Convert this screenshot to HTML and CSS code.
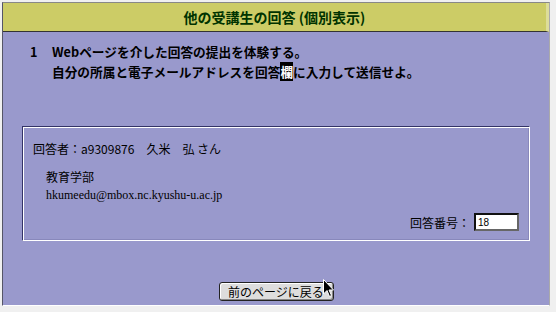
FILE: index.html
```html
<!DOCTYPE html>
<html lang="ja">
<head>
    <meta charset="UTF-8">
    <title>他の受講生の回答 (個別表示)</title>
    <link rel="stylesheet" href="styles.css">
</head>
<body>
    <div class="frame">
        <div class="header">他の受講生の回答 (個別表示)</div>
        <div class="question">
            <span class="qnum">1</span>
            <div class="qtext">
                Webページを介した回答の提出を体験する。<br>
                自分の所属と電子メールアドレスを回答<span class="sel">欄</span>に入力して送信せよ。
            </div>
        </div>
        <div class="answer">
            <div class="who">回答者：a9309876　久米　弘 さん</div>
            <div class="dept">教育学部</div>
            <div class="mail">hkumeedu@mbox.nc.kyushu-u.ac.jp</div>
            <div class="numrow">
                <span>回答番号：</span>
                <input type="text" class="num" value="18">
            </div>
        </div>
        <div class="back">
            <button class="backbtn">前のページに戻る</button>
            <svg class="cursor" width="12" height="19" viewBox="0 0 12 19">
                <path d="M0.5 0.5 L0.5 15 L4 11.5 L6.5 17.5 L8.5 16.5 L6 11 L10.5 11 Z" fill="#000" stroke="#fff" stroke-width="1"/>
            </svg>
        </div>
    </div>
</body>
</html>
```

FILE: styles.css
```css
body {
    margin: 0;
    background: #f0f0f0;
    font-family: "Noto Sans CJK JP", sans-serif;
}
.frame {
    margin: 2px 0 0 2px;
    width: 546px;
    height: 302px;
    background: #9999cc;
    border-top: 1px solid #888888;
    border-left: 1px solid #555566;
    border-right: 1px solid #aaaaaa;
    border-bottom: 1px solid #ffffff;
}
.header {
    height: 28px;
    line-height: 28px;
    background: #cccc66;
    border-bottom: 1px solid #333333;
    border-right: 3px solid #dddd99;
    text-align: center;
    font-size: 14px;
    font-weight: bold;
    color: #003300;
}
.question {
    display: flex;
    margin-top: 10px;
    padding-left: 27px;
    font-size: 12.7px;
    font-weight: bold;
    line-height: 20px;
    color: #000;
}
.qnum {
    width: 22px;
}
.sel {
    background: #000;
    color: #fff;
}
.answer {
    margin: 44px 19px 0 19px;
    height: 113px;
    padding: 0 10px;
    border: 1px solid;
    border-color: #333366 #ffffff #ffffff #333366;
    box-shadow: inset 1px 1px 0 #ffffff, inset -1px -1px 0 #8888bb;
    font-size: 12px;
    color: #000;
    display: flex;
    flex-direction: column;
}
.who {
    margin-top: 14px;
    line-height: 16px;
}
.dept {
    margin: 12px 0 0 13px;
    line-height: 16px;
}
.mail {
    margin: 2px 0 0 13px;
    line-height: 16px;
    font-family: "Liberation Serif", serif;
    font-size: 12px;
}
.numrow {
    margin-top: 10px;
    display: flex;
    justify-content: flex-end;
    align-items: center;
    gap: 4px;
}
.num {
    width: 37px;
    height: 14px;
    padding: 0 2px;
    margin: 0;
    border: 2px inset #666666;
    background: #fff;
    font-family: "Liberation Sans", sans-serif;
    font-size: 10px;
}
.back {
    position: relative;
    margin-top: 37px;
    text-align: center;
}
.backbtn {
    width: 115px;
    height: 19px;
    padding: 0;
    font-family: "Noto Sans CJK JP", sans-serif;
    font-size: 12px;
    line-height: 15px;
    color: #000;
    background: #dddddd;
    border: 1px solid #222222;
    border-radius: 3px;
    box-shadow: inset 1px 1px 0 #ffffff, inset -1px -1px 0 #888888;
}
.cursor {
    position: absolute;
    left: 320px;
    top: 1px;
}
```
